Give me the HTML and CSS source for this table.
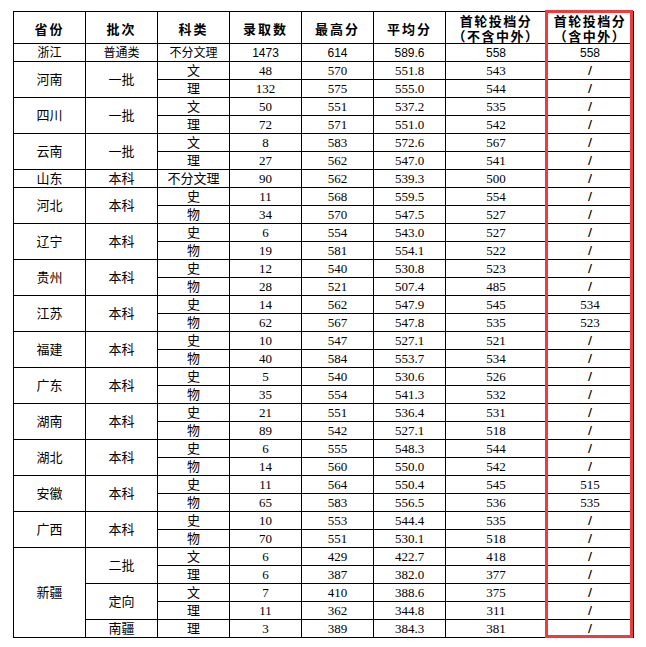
FILE: index.html
```html
<!DOCTYPE html>
<html lang="zh-CN">
<head>
<meta charset="utf-8">
<title>录取分数</title>
<link rel="stylesheet" href="styles.css">
</head>
<body>
<div class="sheet">
<table class="scores">
<colgroup>
<col class="c-std"><col class="c-std"><col class="c-std"><col class="c-std"><col class="c-std"><col class="c-std"><col class="c-wide"><col class="c-last">
</colgroup>
<thead>
<tr>
<th>省份</th><th>批次</th><th>科类</th><th>录取数</th><th>最高分</th><th>平均分</th><th class="two"><span class="ln">首轮投档分</span><span class="ln">（不含中外）</span></th><th class="two"><span class="ln">首轮投档分</span><span class="ln">（含中外）</span></th>
</tr>
</thead>
<tbody>
<tr class="sans"><td>浙江</td><td>普通类</td><td>不分文理</td><td>1473</td><td>614</td><td>589.6</td><td>558</td><td>558</td></tr>
<tr><td rowspan="2">河南</td><td rowspan="2">一批</td><td>文</td><td>48</td><td>570</td><td>551.8</td><td>543</td><td class="na">/</td></tr>
<tr><td>理</td><td>132</td><td>575</td><td>555.0</td><td>544</td><td class="na">/</td></tr>
<tr><td rowspan="2">四川</td><td rowspan="2">一批</td><td>文</td><td>50</td><td>551</td><td>537.2</td><td>535</td><td class="na">/</td></tr>
<tr><td>理</td><td>72</td><td>571</td><td>551.0</td><td>542</td><td class="na">/</td></tr>
<tr><td rowspan="2">云南</td><td rowspan="2">一批</td><td>文</td><td>8</td><td>583</td><td>572.6</td><td>567</td><td class="na">/</td></tr>
<tr><td>理</td><td>27</td><td>562</td><td>547.0</td><td>541</td><td class="na">/</td></tr>
<tr><td>山东</td><td>本科</td><td>不分文理</td><td>90</td><td>562</td><td>539.3</td><td>500</td><td class="na">/</td></tr>
<tr><td rowspan="2">河北</td><td rowspan="2">本科</td><td>史</td><td>11</td><td>568</td><td>559.5</td><td>554</td><td class="na">/</td></tr>
<tr><td>物</td><td>34</td><td>570</td><td>547.5</td><td>527</td><td class="na">/</td></tr>
<tr><td rowspan="2">辽宁</td><td rowspan="2">本科</td><td>史</td><td>6</td><td>554</td><td>543.0</td><td>527</td><td class="na">/</td></tr>
<tr><td>物</td><td>19</td><td>581</td><td>554.1</td><td>522</td><td class="na">/</td></tr>
<tr><td rowspan="2">贵州</td><td rowspan="2">本科</td><td>史</td><td>12</td><td>540</td><td>530.8</td><td>523</td><td class="na">/</td></tr>
<tr><td>物</td><td>28</td><td>521</td><td>507.4</td><td>485</td><td class="na">/</td></tr>
<tr><td rowspan="2">江苏</td><td rowspan="2">本科</td><td>史</td><td>14</td><td>562</td><td>547.9</td><td>545</td><td>534</td></tr>
<tr><td>物</td><td>62</td><td>567</td><td>547.8</td><td>535</td><td>523</td></tr>
<tr><td rowspan="2">福建</td><td rowspan="2">本科</td><td>史</td><td>10</td><td>547</td><td>527.1</td><td>521</td><td class="na">/</td></tr>
<tr><td>物</td><td>40</td><td>584</td><td>553.7</td><td>534</td><td class="na">/</td></tr>
<tr><td rowspan="2">广东</td><td rowspan="2">本科</td><td>史</td><td>5</td><td>540</td><td>530.6</td><td>526</td><td class="na">/</td></tr>
<tr><td>物</td><td>35</td><td>554</td><td>541.3</td><td>532</td><td class="na">/</td></tr>
<tr><td rowspan="2">湖南</td><td rowspan="2">本科</td><td>史</td><td>21</td><td>551</td><td>536.4</td><td>531</td><td class="na">/</td></tr>
<tr><td>物</td><td>89</td><td>542</td><td>527.1</td><td>518</td><td class="na">/</td></tr>
<tr><td rowspan="2">湖北</td><td rowspan="2">本科</td><td>史</td><td>6</td><td>555</td><td>548.3</td><td>544</td><td class="na">/</td></tr>
<tr><td>物</td><td>14</td><td>560</td><td>550.0</td><td>542</td><td class="na">/</td></tr>
<tr><td rowspan="2">安徽</td><td rowspan="2">本科</td><td>史</td><td>11</td><td>564</td><td>550.4</td><td>545</td><td>515</td></tr>
<tr><td>物</td><td>65</td><td>583</td><td>556.5</td><td>536</td><td>535</td></tr>
<tr><td rowspan="2">广西</td><td rowspan="2">本科</td><td>史</td><td>10</td><td>553</td><td>544.4</td><td>535</td><td class="na">/</td></tr>
<tr><td>物</td><td>70</td><td>551</td><td>530.1</td><td>518</td><td class="na">/</td></tr>
<tr><td rowspan="5">新疆</td><td rowspan="2">二批</td><td>文</td><td>6</td><td>429</td><td>422.7</td><td>418</td><td class="na">/</td></tr>
<tr><td>理</td><td>6</td><td>387</td><td>382.0</td><td>377</td><td class="na">/</td></tr>
<tr><td rowspan="2">定向</td><td>文</td><td>7</td><td>410</td><td>388.6</td><td>375</td><td class="na">/</td></tr>
<tr><td>理</td><td>11</td><td>362</td><td>344.8</td><td>311</td><td class="na">/</td></tr>
<tr><td>南疆</td><td>理</td><td>3</td><td>389</td><td>384.3</td><td>381</td><td class="na">/</td></tr>
</tbody>
</table>
<div class="highlight"></div>
</div>
</body>
</html>
```
FILE: styles.css
```css
html, body {
  margin: 0;
  padding: 0;
  background: #ffffff;
}

.sheet {
  position: relative;
  padding: 11px 0 0 13px;
}

.scores {
  border-collapse: collapse;
  table-layout: fixed;
  width: 620px;
  font-family: "Liberation Serif", "Noto Sans CJK SC", serif;
  font-size: 13px;
  color: #000;
}

.c-std { width: 72px; }
.c-wide { width: 101px; }
.c-last { width: 87px; }

.scores th,
.scores td {
  border: 1px solid #000;
  padding: 0;
  text-align: center;
  white-space: nowrap;
}

.scores th {
  height: 29px;
  padding-top: 2px;
  font-family: "Noto Sans CJK SC", sans-serif;
  font-weight: 700;
  font-size: 13px;
  letter-spacing: 2px;
  line-height: 15px;
}

.scores th.two {
  height: 30px;
  padding-top: 1px;
  letter-spacing: 1.5px;
}

.scores th .ln {
  display: block;
  height: 15px;
}

.scores td {
  height: 16px;
  line-height: 16px;
  padding-top: 1px;
}

.scores tr.sans td {
  font-family: "Liberation Sans", "Noto Sans CJK SC", sans-serif;
  font-size: 12px;
}

.scores td.na {
  font-family: "DejaVu Sans", sans-serif;
  font-weight: 700;
  font-size: 11px;
}

.highlight {
  position: absolute;
  left: 545px;
  top: 10px;
  width: 88px;
  height: 628px;
  border: 3px solid #ef3b3b;
  box-sizing: border-box;
  pointer-events: none;
}
```
